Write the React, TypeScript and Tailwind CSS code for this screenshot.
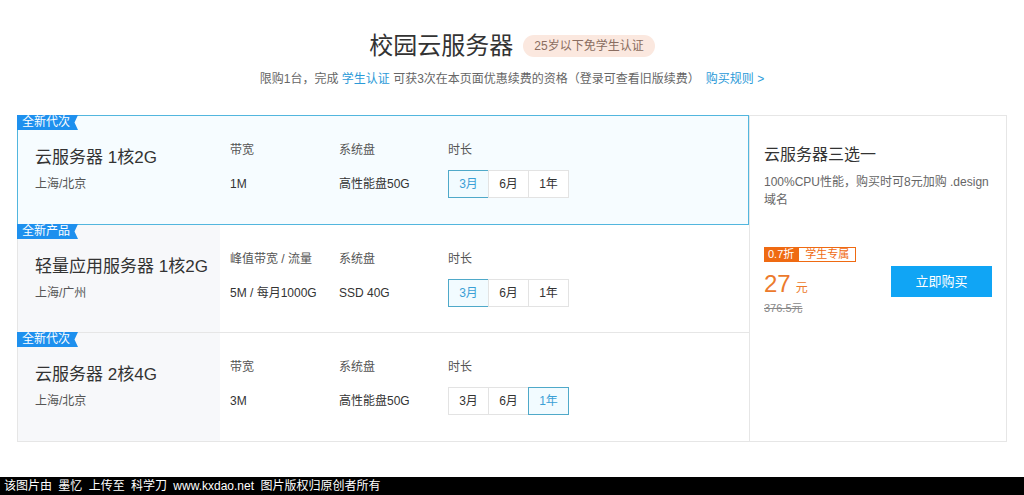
import React from 'react';

type Row = {
  tag: string;
  name: string;
  region: string;
  labels: [string, string];
  values: [string, string];
  selected: number;
  active?: boolean;
  h: string;
};

const ROWS: Row[] = [
  { tag: '全新代次', name: '云服务器 1核2G', region: '上海/北京', labels: ['带宽', '系统盘'], values: ['1M', '高性能盘50G'], selected: 0, active: true, h: 'h-[110px]' },
  { tag: '全新产品', name: '轻量应用服务器 1核2G', region: '上海/广州', labels: ['峰值带宽 / 流量', '系统盘'], values: ['5M / 每月1000G', 'SSD 40G'], selected: 0, h: 'h-[108px]' },
  { tag: '全新代次', name: '云服务器 2核4G', region: '上海/北京', labels: ['带宽', '系统盘'], values: ['3M', '高性能盘50G'], selected: 2, h: 'h-[109px]' },
];

const PERIODS = ['3月', '6月', '1年'];

function Tag({ text }: { text: string }) {
  return (
    <div className="absolute -left-px -top-px flex h-[15px]">
      <div className="bg-[#1e90ee] pl-[5px] pr-[2px] text-[12px] leading-[15px] text-white">{text}</div>
      <svg width="6" height="15" viewBox="0 0 6 15" className="block">
        <path d="M0 0H6L2.5 7.5L6 15H0Z" fill="#1e90ee" />
      </svg>
    </div>
  );
}

function ProductRow({ row, first }: { row: Row; first: boolean }) {
  return (
    <div
      className={`relative flex ${row.h} ${
        row.active
          ? 'border border-[#52b6de] bg-[#f6fcff]'
          : `border-l border-b border-[#e6e6e6] ${first ? 'border-t' : ''}`
      }`}
    >
      <Tag text={row.tag} />
      <div className={`w-[202px] shrink-0 pl-[17px] pt-[30px] ${row.active ? '' : 'bg-[#f7f8fa]'}`}>
        <div className="text-[17px] leading-6 text-[#333]">{row.name}</div>
        <div className="mt-[4px] text-[12px] leading-5 text-[#555]">{row.region}</div>
      </div>
      <div className="flex pt-[24px]">
        {row.labels.map((l, i) => (
          <div key={l} className={i === 0 ? 'w-[119px] pl-[10px]' : 'w-[109px]'}>
            <div className="text-[12px] leading-5 text-[#555]">{l}</div>
            <div className="mt-[10px] flex h-[28px] items-center text-[12px] text-[#333]">{row.values[i]}</div>
          </div>
        ))}
        <div>
          <div className="text-[12px] leading-5 text-[#555]">时长</div>
          <div className="mt-[10px] flex h-[28px]">
            {PERIODS.map((p, i) =>
              i === row.selected ? (
                <div
                  key={p}
                  className="-ml-px flex w-[41px] items-center justify-center border border-[#4fa9c9] bg-[#f2fbff] text-[12px] text-[#3ba0d6] first:ml-0"
                >
                  {p}
                </div>
              ) : (
                <div
                  key={p}
                  className="-ml-px flex w-[41px] items-center justify-center border border-[#e3e3e3] bg-white text-[12px] text-[#333] first:ml-0"
                >
                  {p}
                </div>
              ),
            )}
          </div>
        </div>
      </div>
    </div>
  );
}

export default function App() {
  return (
    <div className="bg-white font-['Liberation_Sans','Noto_Sans_CJK_SC',sans-serif]">
      <div className="h-[477px] pt-[30px]">
        <div className="flex items-center justify-center">
          <h1 className="text-[24px] leading-8 text-[#333]">校园云服务器</h1>
          <span className="ml-[10px] rounded-full bg-[#fbe8df] px-[11px] text-[12px] leading-[22px] text-[#8a6d60]">
            25岁以下免学生认证
          </span>
        </div>
        <p className="mt-[7px] text-center text-[12px] leading-5 text-[#666]">
          限购1台，完成 <span className="text-[#2b9ad8]">学生认证</span> 可获3次在本页面优惠续费的资格（登录可查看旧版续费）
          <span className="ml-[6px] text-[#2b9ad8]">购买规则 &gt;</span>
        </p>

        <div className="mx-auto mt-[26px] flex w-[990px]">
          <div className="w-[732px] shrink-0">
            {ROWS.map((r, i) => (
              <ProductRow key={r.name} row={r} first={i === 0} />
            ))}
          </div>
          <div className="flex-1 border border-[#e6e6e6] pl-[14px] pr-[14px] pt-[29px]">
            <div className="text-[16px] leading-5 text-[#333]">云服务器三选一</div>
            <p className="mt-[8px] text-[12px] leading-[18px] text-[#666]">100%CPU性能，购买时可8元加购 .design 域名</p>
            <div className="mt-[38px] flex items-center justify-between">
              <div>
                <div className="flex h-[15px] text-[11px] leading-[13px]">
                  <span className="border border-[#ef6a12] bg-[#ef6a12] px-[3px] text-white">0.7折</span>
                  <span className="border border-[#ef6a12] px-[6px] text-[#ef6a12]">学生专属</span>
                </div>
                <div className="mt-[8px] flex items-baseline text-[#ec7a2c]">
                  <span className="text-[24px] leading-7">27</span>
                  <span className="ml-[5px] text-[12px]">元</span>
                </div>
                <div className="mt-[2px] text-[11px] leading-4 text-[#888] line-through">376.5元</div>
              </div>
              <button className="h-[31px] w-[101px] bg-[#10a5f5] text-[13px] text-white">立即购买</button>
            </div>
          </div>
        </div>
      </div>
      <div className="h-[18px] bg-black pl-[4px] text-[12px] leading-[18px] text-white [word-spacing:3px]">
        该图片由 墨忆 上传至 科学刀 www.kxdao.net 图片版权归原创者所有
      </div>
    </div>
  );
}
